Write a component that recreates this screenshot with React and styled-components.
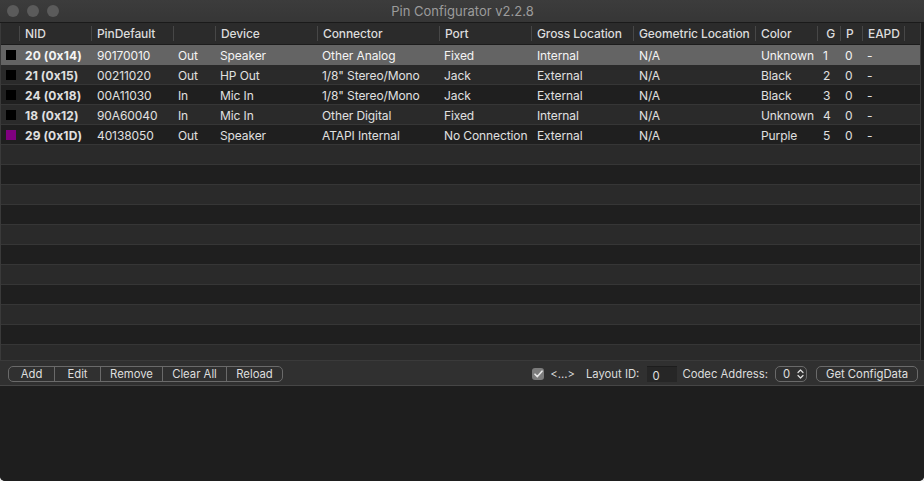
import React from "react";
import styled, { createGlobalStyle } from "styled-components";

const GlobalStyle = createGlobalStyle`
  html, body { margin: 0; padding: 0; background: #ececec; }
  body { font-family: Inter, "Liberation Sans", Arial, sans-serif; }
  * { box-sizing: border-box; }
`;

const COLS = "19px 72px 82px 42px 102px 122px 92px 102px 122px 62px 23px 22px 42px 1fr";

const Window = styled.div`
  width: 924px;
  height: 481px;
  display: flex;
  flex-direction: column;
  background: #1e1e1e;
  border-radius: 0 0 5px 5px;
  overflow: hidden;
  font-size: 12px;
  color: #e2e2e2;
`;

const TitleBar = styled.div`
  height: 23px;
  flex: none;
  display: flex;
  align-items: center;
  background: linear-gradient(#3c3c3c, #363636);
  border-bottom: 1px solid #1a1a1a;
`;

const Lights = styled.div`
  display: flex;
  gap: 8px;
  padding-left: 7px;
`;

const Light = styled.span`
  width: 12px;
  height: 12px;
  border-radius: 50%;
  background: #5b5b5b;
`;

const Title = styled.div`
  flex: 1;
  text-align: center;
  margin-right: 58px;
  font-size: 13px;
  color: #9c9c9c;
`;

const TableView = styled.div`
  height: 337px;
  flex: none;
  display: flex;
  flex-direction: column;
  border-left: 1px solid #3a3a3a;
  border-right: 1px solid #3a3a3a;
  margin-right: 3px;
  overflow: hidden;
  background: #1f1f1f;
`;

const HeaderRow = styled.div`
  display: grid;
  grid-template-columns: ${COLS};
  height: 22px;
  flex: none;
  background: #2b2b2b;
  border-bottom: 1px solid #1c1c1c;
`;

const HeaderCell = styled.div`
  position: relative;
  display: flex;
  align-items: center;
  justify-content: ${(p) => (p.$right ? "flex-end" : "flex-start")};
  padding: 0 ${(p) => (p.$right ? "6px" : "4px")} 0 5px;
  font-weight: 500;
  color: #dcdcdc;
  white-space: nowrap;
  letter-spacing: -0.1px;
  &::after {
    content: "";
    display: ${(p) => (p.$noSep ? "none" : "block")};
    position: absolute;
    right: 0;
    top: 3px;
    bottom: 3px;
    width: 1px;
    background: #474747;
  }
`;

const Row = styled.div`
  display: grid;
  grid-template-columns: ${COLS};
  height: 20px;
  flex: none;
  align-items: center;
  padding-top: 1px;
  background: ${(p) => (p.$selected ? "#646464" : p.$alt ? "#2a2a2a" : "#1f1f1f")};
  border-bottom: 1px solid ${(p) => (p.$selected ? "#646464" : "#363636")};
  color: ${(p) => (p.$selected ? "#f4f4f4" : "#e0e0e0")};
`;

const Cell = styled.div`
  padding: 0 2px 0 ${(p) => p.$pad || 4}px;
  white-space: nowrap;
  overflow: hidden;
  letter-spacing: ${(p) => (p.$bold ? "0.1px" : "-0.1px")};
  font-weight: ${(p) => (p.$bold ? 700 : 400)};
`;

const SwatchCell = styled.div`
  display: flex;
  justify-content: center;
  padding-bottom: 1px;
`;

const Swatch = styled.span`
  width: 10px;
  height: 10px;
  background: ${(p) => p.$color};
`;

const Toolbar = styled.div`
  height: 26px;
  flex: none;
  display: flex;
  align-items: center;
  padding: 1px 6px 0 8px;
  background: #303030;
  border-top: 1px solid #3a3a3a;
  border-bottom: 1px solid #464646;
  font-size: 11.3px;
`;

const Segmented = styled.div`
  display: flex;
  height: 16px;
  border: 1px solid #6a6a6a;
  border-radius: 5px;
`;

const Segment = styled.div`
  width: ${(p) => p.$w}px;
  display: flex;
  align-items: center;
  justify-content: center;
  color: #dedede;
  border-left: ${(p) => (p.$first ? "none" : "1px solid #6a6a6a")};
`;

const RightGroup = styled.div`
  margin-left: auto;
  display: flex;
  align-items: center;
`;

const Check = styled.span`
  width: 12px;
  height: 12px;
  border-radius: 3px;
  background: #7c7c7c;
  display: flex;
  align-items: center;
  justify-content: center;
`;

const Label = styled.span`
  margin-left: ${(p) => p.$ml || 0}px;
  color: #dcdcdc;
  white-space: nowrap;
`;

const Input = styled.div`
  margin-left: 8px;
  width: 30px;
  height: 16px;
  background: #262626;
  border-top: 1px solid #1d1d1d;
  color: #e0e0e0;
  padding: 3px 0 0 5px;
  line-height: 13px;
`;

const Popup = styled.div`
  margin-left: 7px;
  width: 32px;
  height: 16px;
  border: 1px solid #6a6a6a;
  border-radius: 5px;
  display: flex;
  align-items: center;
  padding-left: 7px;
  gap: 7px;
  color: #e0e0e0;
`;

const Button = styled.div`
  margin-left: 9px;
  width: 102px;
  height: 16px;
  border: 1px solid #6a6a6a;
  border-radius: 5px;
  display: flex;
  align-items: center;
  justify-content: center;
  color: #e0e0e0;
`;

const Bottom = styled.div`
  flex: 1;
  background: #1e1e1e;
`;

const headers = [
  { t: "" }, { t: "NID" }, { t: "PinDefault" }, { t: "" }, { t: "Device" },
  { t: "Connector" }, { t: "Port" }, { t: "Gross Location" }, { t: "Geometric Location" },
  { t: "Color" }, { t: "G", right: true }, { t: "P" }, { t: "EAPD" }, { t: "", noSep: true },
];

const data = [
  ["#000", "20 (0x14)", "90170010", "Out", "Speaker", "Other Analog", "Fixed", "Internal", "N/A", "Unknown", "1", "0", "-"],
  ["#000", "21 (0x15)", "00211020", "Out", "HP Out", "1/8\" Stereo/Mono", "Jack", "External", "N/A", "Black", "2", "0", "-"],
  ["#000", "24 (0x18)", "00A11030", "In", "Mic In", "1/8\" Stereo/Mono", "Jack", "External", "N/A", "Black", "3", "0", "-"],
  ["#000", "18 (0x12)", "90A60040", "In", "Mic In", "Other Digital", "Fixed", "Internal", "N/A", "Unknown", "4", "0", "-"],
  ["#7f007f", "29 (0x1D)", "40138050", "Out", "Speaker", "ATAPI Internal", "No Connection", "External", "N/A", "Purple", "5", "0", "-"],
];

const pads = [5, 5, 4, 4, 4, 4, 5, 5, 5, 5, 4, 4];

const segments = [
  ["Add", 45], ["Edit", 46], ["Remove", 62], ["Clear All", 64], ["Reload", 56],
];

export default function App() {
  const rows = [];
  for (let i = 0; i < 16; i++) rows.push(data[i] || null);
  return (
    <>
      <GlobalStyle />
      <Window>
        <TitleBar>
          <Lights>
            <Light />
            <Light />
            <Light />
          </Lights>
          <Title>Pin Configurator v2.2.8</Title>
        </TitleBar>
        <TableView>
          <HeaderRow>
            {headers.map((h, i) => (
              <HeaderCell key={i} $right={h.right} $noSep={h.noSep}>{h.t}</HeaderCell>
            ))}
          </HeaderRow>
          {rows.map((r, i) => (
            <Row key={i} $selected={i === 0} $alt={i % 2 === 1}>
              {r ? (
                <>
                  <SwatchCell><Swatch $color={r[0]} /></SwatchCell>
                  {r.slice(1).map((v, j) => (
                    <Cell key={j} $bold={j === 0} $pad={pads[j]}>{v}</Cell>
                  ))}
                </>
              ) : null}
            </Row>
          ))}
        </TableView>
        <Toolbar>
          <Segmented>
            {segments.map(([t, w], i) => (
              <Segment key={t} $w={w} $first={i === 0}>{t}</Segment>
            ))}
          </Segmented>
          <RightGroup>
            <Check>
              <svg width="9" height="8" viewBox="0 0 9 8">
                <path d="M1 4.2 L3.4 6.6 L8 1.2" fill="none" stroke="#e8e8e8" strokeWidth="1.6" strokeLinecap="round" strokeLinejoin="round" />
              </svg>
            </Check>
            <Label $ml={6}>&lt;...&gt;</Label>
            <Label $ml={11}>Layout ID:</Label>
            <Input>0</Input>
            <Label $ml={5}>Codec Address:</Label>
            <Popup>
              <span>0</span>
              <svg width="7" height="10" viewBox="0 0 7 10">
                <path d="M1 3.5 L3.5 1 L6 3.5 M1 6.5 L3.5 9 L6 6.5" fill="none" stroke="#e0e0e0" strokeWidth="1.2" strokeLinecap="round" strokeLinejoin="round" />
              </svg>
            </Popup>
            <Button>Get ConfigData</Button>
          </RightGroup>
        </Toolbar>
        <Bottom />
      </Window>
    </>
  );
}
